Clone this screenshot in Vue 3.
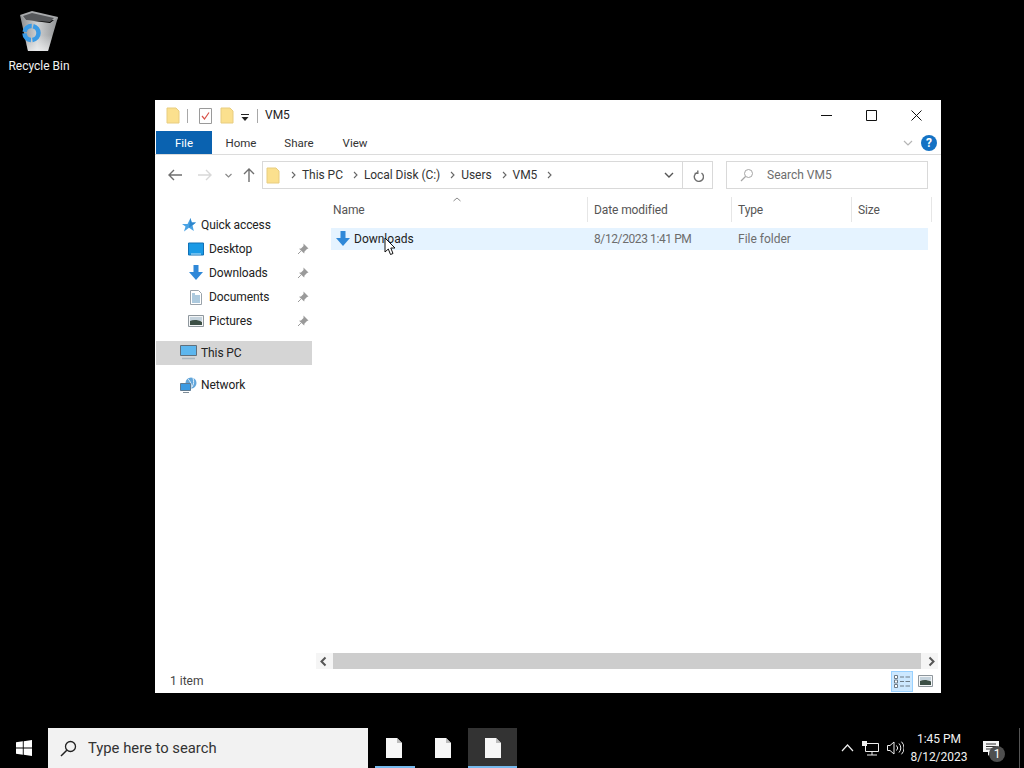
<script setup>
const pinned = ['Desktop', 'Downloads', 'Documents', 'Pictures']
const crumbs = ['This PC', 'Local Disk (C:)', 'Users', 'VM5']
</script>

<template>
  <div class="screen">
    <main class="desktop">
      <div class="recycle">
        <svg width="44" height="44" viewBox="0 0 44 44">
          <defs>
            <linearGradient id="binBody" x1="0" y1="0" x2="1" y2="0">
              <stop offset="0" stop-color="#8b8d8f"/>
              <stop offset="0.45" stop-color="#cfd1d3"/>
              <stop offset="1" stop-color="#909294"/>
            </linearGradient>
            <linearGradient id="binLow" x1="0" y1="0" x2="0" y2="1">
              <stop offset="0" stop-color="#ffffff" stop-opacity="0"/>
              <stop offset="1" stop-color="#ffffff" stop-opacity=".6"/>
            </linearGradient>
          </defs>
          <path d="M3 6 L15 2 L41 8 L40 11 L7 12 Z" fill="#a7a9ab"/>
          <path d="M6 7 L15 4 L37 9 L33 13 L9 11 Z" fill="#55575a"/>
          <path d="M3 6 L9 11 L33 14 L41 8 L31 42 L11 42 Z" fill="url(#binBody)"/>
          <path d="M7.500 28 L36 26 L31 42 L11 42 Z" fill="url(#binLow)"/>
          <circle cx="14.500" cy="24" r="7" fill="none" stroke="#3a9be6" stroke-width="4.500" stroke-dasharray="10 1.500"/>
        </svg>
        <span>Recycle Bin</span>
      </div>

      <section class="window">
        <header class="titlebar">
          <svg class="ico" width="14" height="17" viewBox="0 0 14 17"><path d="M1 1h9l3 3v12H1z" fill="#fbe08e" stroke="#e8cd80"/></svg>
          <i class="sep"></i>
          <svg class="ico todo" width="13" height="16" viewBox="0 0 13 16"><path d="M.5.5h12v15H.5z" fill="#fff" stroke="#9a9a9a"/><path d="M3 8l2.5 3L10 4.500" fill="none" stroke="#d9534a" stroke-width="1.200"/></svg>
          <svg class="ico" width="14" height="17" viewBox="0 0 14 17"><path d="M1 1h9l3 3v12H1z" fill="#fbe08e" stroke="#e8cd80"/></svg>
          <svg class="ico qat" width="8" height="8" viewBox="0 0 8 8"><path d="M0 1h8v1H0zM.5 4h7L4 8z" fill="#222"/></svg>
          <i class="sep last"></i>
          <span class="wintitle">VM5</span>
          <div class="caption">
            <span class="capbtn"><svg width="11" height="11" viewBox="0 0 11 11"><path d="M0 5.500h11" stroke="#111"/></svg></span>
            <span class="capbtn"><svg width="11" height="11" viewBox="0 0 11 11"><path d="M.5.500h10v10H.5z" fill="none" stroke="#111"/></svg></span>
            <span class="capbtn"><svg width="11" height="11" viewBox="0 0 11 11"><path d="M.5.500l10 10M10.500.500l-10 10" stroke="#111"/></svg></span>
          </div>
        </header>

        <nav class="ribbon">
          <span class="tab file">File</span>
          <span class="tab">Home</span>
          <span class="tab">Share</span>
          <span class="tab view">View</span>
          <svg class="collapse" width="10" height="6" viewBox="0 0 10 6"><path d="M1 1l4 4 4-4" fill="none" stroke="#b5b5b5" stroke-width="1.200"/></svg>
          <span class="help">?</span>
        </nav>

        <div class="addressrow">
          <svg class="navbtn" width="14" height="12" viewBox="0 0 14 12"><path d="M6 1L1 6l5 5M1 6h13" fill="none" stroke="#6f6f6f" stroke-width="1.400"/></svg>
          <svg class="navbtn fwd" width="14" height="12" viewBox="0 0 14 12"><path d="M8 1l5 5-5 5M13 6H0" fill="none" stroke="#d8d8d8" stroke-width="1.400"/></svg>
          <svg class="navbtn drop" width="7" height="5" viewBox="0 0 7 5"><path d="M.5 1l3 3 3-3" fill="none" stroke="#8a8a8a" stroke-width="1.200"/></svg>
          <svg class="navbtn up" width="12" height="14" viewBox="0 0 12 14"><path d="M1 6l5-5 5 5M6 1v13" fill="none" stroke="#6f6f6f" stroke-width="1.400"/></svg>
          <div class="address">
            <svg class="crumbfolder" width="14" height="17" viewBox="0 0 14 17"><path d="M1 1h9l3 3v12H1z" fill="#fbe08e" stroke="#e8cd80"/></svg>
            <template v-for="c in crumbs" :key="c">
              <svg class="chev" width="5" height="8" viewBox="0 0 5 8"><path d="M1 1l3 3-3 3" fill="none" stroke="#666" stroke-width="1.100"/></svg>
              <span class="crumb">{{ c }}</span>
            </template>
            <svg class="chev endchev" width="5" height="8" viewBox="0 0 5 8"><path d="M1 1l3 3-3 3" fill="none" stroke="#666" stroke-width="1.100"/></svg>
            <svg class="addrdrop" width="10" height="6" viewBox="0 0 10 6"><path d="M1 1l4 4 4-4" fill="none" stroke="#555" stroke-width="1.400"/></svg>
            <span class="refresh">
              <svg width="12" height="13" viewBox="0 0 12 13"><path d="M4 2.600A4.600 4.600 0 1 0 8.500 3M4.800 .4v3h-3.200" fill="none" stroke="#6f6f6f" stroke-width="1.400" transform="translate(1 1)"/></svg>
            </span>
          </div>
          <div class="search">
            <svg width="14" height="14" viewBox="0 0 14 14"><circle cx="8.500" cy="5.500" r="4" fill="none" stroke="#a5a5a5"/><path d="M5.500 8.500L1 13" stroke="#a5a5a5" stroke-width="1.200"/></svg>
            <span>Search VM5</span>
          </div>
        </div>

        <div class="body">
          <aside class="navpane">
            <div class="navrow top">
              <svg width="14" height="14" viewBox="0 0 14 14"><path d="M8.500 0l1.200 4.500H14l-3.500 2.800 1.300 5.700L7 9.800 2 13.500l1.500-5L0 6h5.500z" fill="#4aa3e4"/><path d="M8.500 0l1.200 4.500H14l-3.500 2.800L7 9.800z" fill="#2d86cc"/></svg>
              <span>Quick access</span>
            </div>
            <div v-for="name in pinned" :key="name" class="navrow sub">
              <svg v-if="name === 'Desktop'" width="16" height="14" viewBox="0 0 16 14"><path d="M.5 1h15v12H.5z" fill="#1a9ae6" stroke="#1170b5"/><path d="M3 12h10" stroke="#bfe4fa"/></svg>
              <svg v-else-if="name === 'Downloads'" width="16" height="16" viewBox="0 0 16 16"><path d="M5.500 0h5v7H15l-7 8-7-8h4.500z" fill="#2f88d8"/></svg>
              <svg v-else-if="name === 'Documents'" width="16" height="15" viewBox="0 0 16 15"><path d="M2.500.5h8l3 3v11h-11z" fill="#fff" stroke="#9aa3ab"/><path d="M4 4h3M4 6h8M4 8h8M4 10h8M4 12h8" stroke="#5a94bd"/></svg>
              <svg v-else width="16" height="12" viewBox="0 0 16 12"><path d="M.5.500h15v11H.5z" fill="#f4f6f7" stroke="#8f979d"/><path d="M2 2h12v4H2z" fill="#c5d3dd"/><path d="M2 6c3-1.500 8-1.500 12 1v3H2z" fill="#3c4f45"/></svg>
              <span class="label">{{ name }}</span>
              <svg class="pin" width="12" height="12" viewBox="0 0 12 12"><path d="M6.500.5l5 5-1.500.5-2.500 2.500-.3 2L2 5.800l2-.3L6.500 3z" fill="#9a9a9a"/><path d="M3.800 8.200L1 11" stroke="#9a9a9a"/></svg>
            </div>
            <div class="navrow top thispc">
              <svg width="17" height="16" viewBox="0 0 17 16"><path d="M.5.500h16v10H.5z" fill="#5cb6ee" stroke="#5f6f7c"/><path d="M2 13.500h13" stroke="#a9b5bd" stroke-width="1.500"/></svg>
              <span>This PC</span>
            </div>
            <div class="navrow top network">
              <svg width="17" height="16" viewBox="0 0 17 16"><circle cx="11" cy="6" r="5.500" fill="#62a6db"/><path d="M8 2c2 2 4 5 3 9M13 1c1 3 1 6-1 9" stroke="#e5f1fa" fill="none"/><path d="M.5 6.500h10v7H.5z" fill="#3b9ae2" stroke="#5f7b92"/><path d="M3 15.500h6" stroke="#7e8c97"/></svg>
              <span>Network</span>
            </div>
          </aside>

          <div class="listpane">
            <div class="colhead">
              <span class="col name">Name
                <svg class="sort" width="8" height="5" viewBox="0 0 8 5"><path d="M.5 4L4 1l3.500 3" fill="none" stroke="#8a8a8a"/></svg>
              </span>
              <span class="col date">Date modified</span>
              <span class="col type">Type</span>
              <span class="col size">Size</span>
            </div>
            <div class="filerow">
              <div class="cell name">
                <svg width="16" height="16" viewBox="0 0 16 16"><path d="M5.500 0h5v7H15l-7 8-7-8h4.500z" fill="#2f88d8"/></svg>
                <span>Downloads</span>
              </div>
              <span class="cell date">8/12/2023 1:41 PM</span>
              <span class="cell type">File folder</span>
              <svg class="cursor" width="13" height="19" viewBox="0 0 13 19"><path d="M1 1v14l3.300-3 2.200 5.500 2.500-1L6.800 11H11z" fill="#fff" stroke="#111" stroke-width="1"/></svg>
            </div>
            <div class="listspace"></div>
            <div class="hscroll">
              <svg class="arrow" width="17" height="15" viewBox="0 0 17 15"><path d="M9.500 3.500l-4 4 4 4" fill="none" stroke="#555" stroke-width="2"/></svg>
              <div class="thumb"></div>
              <svg class="arrow" width="17" height="15" viewBox="0 0 17 15"><path d="M8.500 3.500l4 4-4 4" fill="none" stroke="#555" stroke-width="2"/></svg>
            </div>
          </div>
        </div>

        <footer class="status">
          <span>1 item</span>
          <div class="views">
            <span class="viewbtn active">
              <svg width="17" height="13" viewBox="0 0 17 13"><path d="M.5.500h3v3h-3zM.5 5h3v3h-3zM.5 9.500h3v3h-3z" fill="#fff" stroke="#6c7b86"/><path d="M6 2h4M11.500 2H16M6 6.500h4M11.500 6.500H16M6 11h4M11.500 11H16" stroke="#6c7b86"/></svg>
            </span>
            <span class="viewbtn">
              <svg width="15" height="12" viewBox="0 0 15 12"><path d="M.5.500h14v11H.5z" fill="#f4f6f7" stroke="#8f979d"/><path d="M2 2h11v3.500H2z" fill="#c5d3dd"/><path d="M2 6c3-1.500 7-1.500 11 .5V10H2z" fill="#3c4f45"/></svg>
            </span>
          </div>
        </footer>
      </section>
    </main>

    <footer class="taskbar">
      <span class="start">
        <svg width="16" height="16" viewBox="0 0 16 16"><path d="M0 2.300l6.800-1v6.300H0zM7.700 1.200L16 0v7.600H7.700zM0 8.500h6.800v6.300L0 13.700zM7.700 8.500H16V16l-8.300-1.200z" fill="#fff"/></svg>
      </span>
      <div class="tasksearch">
        <svg width="17" height="17" viewBox="0 0 17 17"><circle cx="10.500" cy="6.500" r="5" fill="none" stroke="#222" stroke-width="1.300"/><path d="M6.800 10.200L1 16" stroke="#222" stroke-width="1.500"/></svg>
        <span>Type here to search</span>
      </div>
      <span class="task running">
        <svg width="16" height="20" viewBox="0 0 16 20"><path d="M0 0h11l5 5v15H0z" fill="#f7f7f7"/><path d="M11 0l5 5h-5z" fill="#bdbdbd"/></svg>
      </span>
      <span class="task">
        <svg width="16" height="20" viewBox="0 0 16 20"><path d="M0 0h11l5 5v15H0z" fill="#f7f7f7"/><path d="M11 0l5 5h-5z" fill="#bdbdbd"/></svg>
      </span>
      <span class="task current">
        <svg width="16" height="20" viewBox="0 0 16 20"><path d="M0 0h11l5 5v15H0z" fill="#f7f7f7"/><path d="M11 0l5 5h-5z" fill="#bdbdbd"/></svg>
      </span>
      <div class="tray">
        <svg class="tchev" width="13" height="8" viewBox="0 0 13 8"><path d="M1 7l5.500-6L12 7" fill="none" stroke="#eee" stroke-width="1.200"/></svg>
        <svg class="tnet" width="17" height="15" viewBox="0 0 17 15"><path d="M3.500 2.500h13v8h-13zM10 10.500V14M5 14h10" fill="none" stroke="#eee"/><path d="M0 0h5v5H0z" fill="#eee"/></svg>
        <svg class="tvol" width="17" height="14" viewBox="0 0 17 14"><path d="M.5 4.500h2.500L7 1v12L3 9.500H.5z" fill="none" stroke="#eee"/><path d="M9.500 4.500a3.500 3.500 0 0 1 0 5M12 2.500a6.500 6.500 0 0 1 0 9M14.500 .7a9 9 0 0 1 0 12.600" fill="none" stroke="#eee"/></svg>
        <div class="clock"><span>1:45 PM</span><span>8/12/2023</span></div>
        <span class="notif">
          <svg width="16" height="15" viewBox="0 0 16 15"><path d="M0 0h16v11H8l-3 4v-4H0z" fill="#f5f5f5"/><path d="M3 3h10M3 5.500h10M3 8h7" stroke="#333"/></svg>
          <b class="badge">1</b>
        </span>
        <i class="showdesk"></i>
      </div>
    </footer>
  </div>
</template>

<style>
html, body { margin: 0; background: #000; }
</style>

<style scoped>
.screen {
  width: 1024px; height: 768px; background: #000; overflow: hidden;
  display: flex; flex-direction: column;
  font-family: Roboto, "Noto Sans", "Liberation Sans", sans-serif;
  font-size: 12px; color: #1a1a1a;
}
.desktop { position: relative; flex: 1; }
.recycle {
  position: absolute; left: 0; top: 9px; width: 78px;
  display: flex; flex-direction: column; align-items: center; gap: 5px;
  color: #f2f2f2;
}
.recycle span { line-height: 16px; }
.window {
  position: absolute; left: 155px; top: 100px; width: 786px; height: 593px;
  background: #fff; display: flex; flex-direction: column;
}
.titlebar { height: 31px; display: flex; align-items: center; padding-left: 11px; flex: none; }
.ico { flex: none; }
.sep { width: 1px; height: 14px; background: #a8a8a8; margin: 0 11px 0 7px; }
.todo { margin-right: 8px; }
.qat { margin-left: 7px; margin-top: 3px; }
.sep.last { margin: 0 7px 0 8px; }
.wintitle { font-size: 12px; color: #222; margin-top: -2px; }
.caption { margin-left: auto; display: flex; margin-right: 2px; }
.capbtn { width: 45px; height: 31px; display: flex; align-items: center; justify-content: center; }
.ribbon { height: 23px; flex: none; display: flex; align-items: center; border-bottom: 1px solid #dcdcdc; box-sizing: content-box; padding-left: 1px; }
.tab { width: 58px; height: 23px; text-align: center; line-height: 25px; color: #333; font-size: 11.5px; }
.tab.file { width: 56px; background: #0a62b0; color: #fff; }
.tab.view { width: 54px; }
.collapse { margin-left: auto; margin-right: 8px; }
.help {
  width: 16px; height: 16px; border-radius: 50%; background: #1472c4; color: #fff;
  font-weight: 700; font-size: 12px; text-align: center; line-height: 16px; margin-right: 4px;
}
.addressrow { height: 42px; box-sizing: border-box; padding: 0 0 2px 13px; flex: none; display: flex; align-items: center; }
.navbtn { flex: none; }
.fwd { margin-left: 16px; }
.drop { margin-left: 13px; }
.up { margin-left: 11px; margin-right: 7px; }
.address {
  width: 451px; height: 28px; box-sizing: border-box; border: 1px solid #d9d9d9;
  display: flex; align-items: center; margin-right: 13px;
}
.crumbfolder { margin-left: 3px; margin-right: 1px; }
.chev { margin: 0 6px 0 10px; flex: none; }
.crumb { white-space: nowrap; color: #333; font-size: 12px; letter-spacing: -0.05px; }
.addrdrop { margin-left: auto; margin-right: 8px; }
.refresh {
  width: 29px; height: 26px; border-left: 1px solid #d9d9d9;
  display: flex; align-items: center; justify-content: center; flex: none;
}
.search {
  width: 202px; height: 28px; box-sizing: border-box; border: 1px solid #d9d9d9;
  display: flex; align-items: center; padding-left: 13px; gap: 13px; color: #6d6d6d;
}
.body { flex: 1; display: flex; min-height: 0; }
.navpane { width: 156px; margin-left: 1px; margin-right: 4px; padding-top: 16px; flex: none; }
.navrow { height: 24px; display: flex; align-items: center; color: #222; letter-spacing: -0.1px; }
.navrow svg { flex: none; }
.navrow.top { padding-left: 24px; gap: 4px; }
.navrow.sub { padding-left: 32px; gap: 5px; position: relative; }
.navrow.top:first-child { padding-left: 26px; gap: 5px; }
.pin { position: absolute; left: 141px; top: 6px; }
.thispc { background: #d5d5d5; margin-top: 8px; }
.network { margin-top: 8px; }
.listpane { flex: 1; display: flex; flex-direction: column; min-width: 0; }
.colhead { height: 25px; flex: none; margin-left: 14px; display: flex; color: #555; letter-spacing: -0.1px; }
.col { box-sizing: border-box; padding-left: 6px; line-height: 27px; border-right: 1px solid #e6e6e6; position: relative; }
.col.name { width: 258px; padding-left: 3px; }
.col.date { width: 144px; }
.col.type { width: 120px; }
.col.size { width: 80px; }
.sort { position: absolute; left: 123px; top: 0; }
.filerow {
  position: relative; margin: 6px 13px 0 15px; height: 22px; flex: none;
  background: #e5f3ff; display: flex; align-items: center; color: #6d6d6d;
}
.cell.name { width: 263px; box-sizing: border-box; padding-left: 4px; display: flex; align-items: center; gap: 3px; color: #222; }
.cell.date { width: 144px; letter-spacing: -0.4px; }
.cursor { position: absolute; left: 53px; top: 9px; }
.listspace { flex: 1; }
.hscroll { height: 16px; margin-right: 3px; display: flex; align-items: center; flex: none; background: #f5f5f5; }
.arrow { flex: none; }
.thumb { flex: 1; height: 16px; background: #cdcdcd; }
.status { height: 24px; flex: none; display: flex; align-items: center; padding-left: 15px; color: #444; }
.views { margin-left: auto; display: flex; margin-right: 6px; gap: 2px; }
.viewbtn { width: 20px; height: 21px; box-sizing: border-box; display: flex; align-items: center; justify-content: center; }
.viewbtn.active { width: 22px; background: #cce8ff; border: 1px solid #99d1ff; }
.taskbar { height: 40px; flex: none; display: flex; align-items: stretch; background: #000; color: #f2f2f2; }
.start { width: 48px; display: flex; align-items: center; justify-content: center; }
.tasksearch {
  width: 320px; background: #f2f2f2; color: #333; display: flex; align-items: center;
  padding-left: 12px; box-sizing: border-box; gap: 11px; font-size: 14.8px;
}
.task { width: 49px; display: flex; align-items: center; justify-content: center; position: relative; }
.running { margin-left: 1px; }
.running::after { content: ""; position: absolute; left: 6px; right: 3px; bottom: 0; height: 2px; background: #76b9ed; }
.current { margin-left: 1px; background: #333; }
.current::after { content: ""; position: absolute; left: 0; right: 0; bottom: 0; height: 2px; background: #76b9ed; }
.tray { margin-left: auto; display: flex; align-items: center; }
.tchev { margin-right: 8px; }
.tnet { margin-right: 8px; }
.tvol { margin-right: 1px; }
.clock {
  width: 68px; display: flex; flex-direction: column; align-items: center;
  line-height: 18px; font-size: 12px;
}
.notif { position: relative; width: 36px; display: flex; justify-content: center; }
.badge {
  position: absolute; left: 16px; top: 5px; width: 16px; height: 16px; border-radius: 50%;
  background: #4f4f4f; color: #fff; font-size: 12px; font-weight: 400; text-align: center; line-height: 16px;
}
.showdesk { width: 1px; height: 40px; background: #555; margin-left: 10px; margin-right: 4px; }
</style>
